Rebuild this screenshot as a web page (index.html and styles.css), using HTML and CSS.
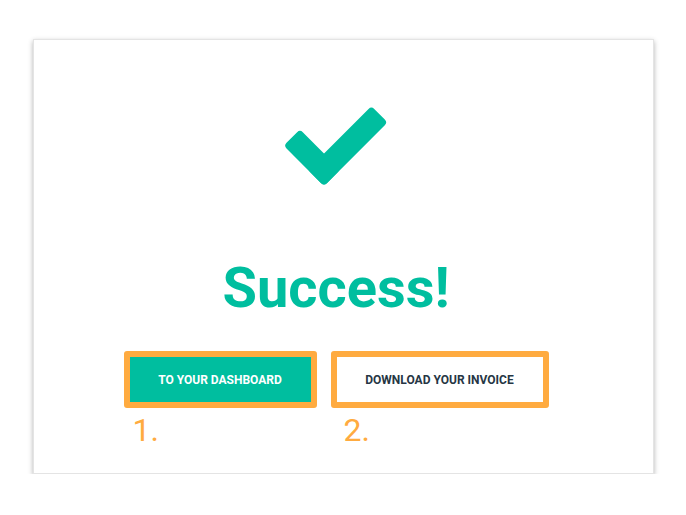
FILE: index.html
```html
<!DOCTYPE html>
<html lang="en">
<head>
<meta charset="utf-8">
<title>Success</title>
<link rel="stylesheet" href="styles.css">
</head>
<body>
<div class="card">
  <svg class="check" width="106" height="84" viewBox="0 0 106 84" aria-hidden="true">
    <g transform="translate(41 81) rotate(45)">
      <rect x="-23" y="-90" width="23" height="90" rx="4"/>
      <rect x="-57" y="-23" width="57" height="23" rx="4"/>
    </g>
  </svg>
  <h1 class="title">Success!</h1>
  <div class="actions">
    <div class="step">
      <div class="mark"><a class="btn btn-primary">TO YOUR DASHBOARD</a></div>
      <div class="num">1.</div>
    </div>
    <div class="step">
      <div class="mark"><a class="btn btn-light">DOWNLOAD YOUR INVOICE</a></div>
      <div class="num num-second">2.</div>
    </div>
  </div>
</div>
</body>
</html>
```
FILE: styles.css
```css
html, body {
  margin: 0;
  padding: 0;
  background: #ffffff;
  font-family: Roboto, "Liberation Sans", Arial, sans-serif;
}
.card {
  box-sizing: border-box;
  margin: 39px 0 0 33px;
  width: 621px;
  height: 435px;
  padding: 65px 15px 0 0;
  background: #ffffff;
  border: 1px solid #e4e4e4;
  box-shadow: 0 2px 5px rgba(0, 0, 0, 0.3);
  display: flex;
  flex-direction: column;
  align-items: center;
}
.check {
  display: block;
  fill: #00be9f;
}
.title {
  margin: 71px 0 0 0;
  font-size: 56px;
  line-height: 56px;
  font-weight: 700;
  color: #00be9f;
}
.actions {
  margin-top: 35px;
  display: flex;
  gap: 14px;
}
.step {
  display: flex;
  flex-direction: column;
}
.mark {
  border: 6px solid #ffab40;
  border-radius: 3px;
  display: flex;
}
.btn {
  display: flex;
  align-items: center;
  justify-content: center;
  height: 45px;
  font-size: 12px;
  font-weight: 700;
  text-decoration: none;
}
.btn-primary {
  width: 181px;
  background: #00be9f;
  color: #ffffff;
}
.btn-light {
  width: 206px;
  background: #ffffff;
  color: #263644;
}
.num {
  margin: 6px 0 0 9px;
  font-size: 32px;
  line-height: 32px;
  color: #ffab40;
}
.num-second {
  margin-left: 13px;
}
```
